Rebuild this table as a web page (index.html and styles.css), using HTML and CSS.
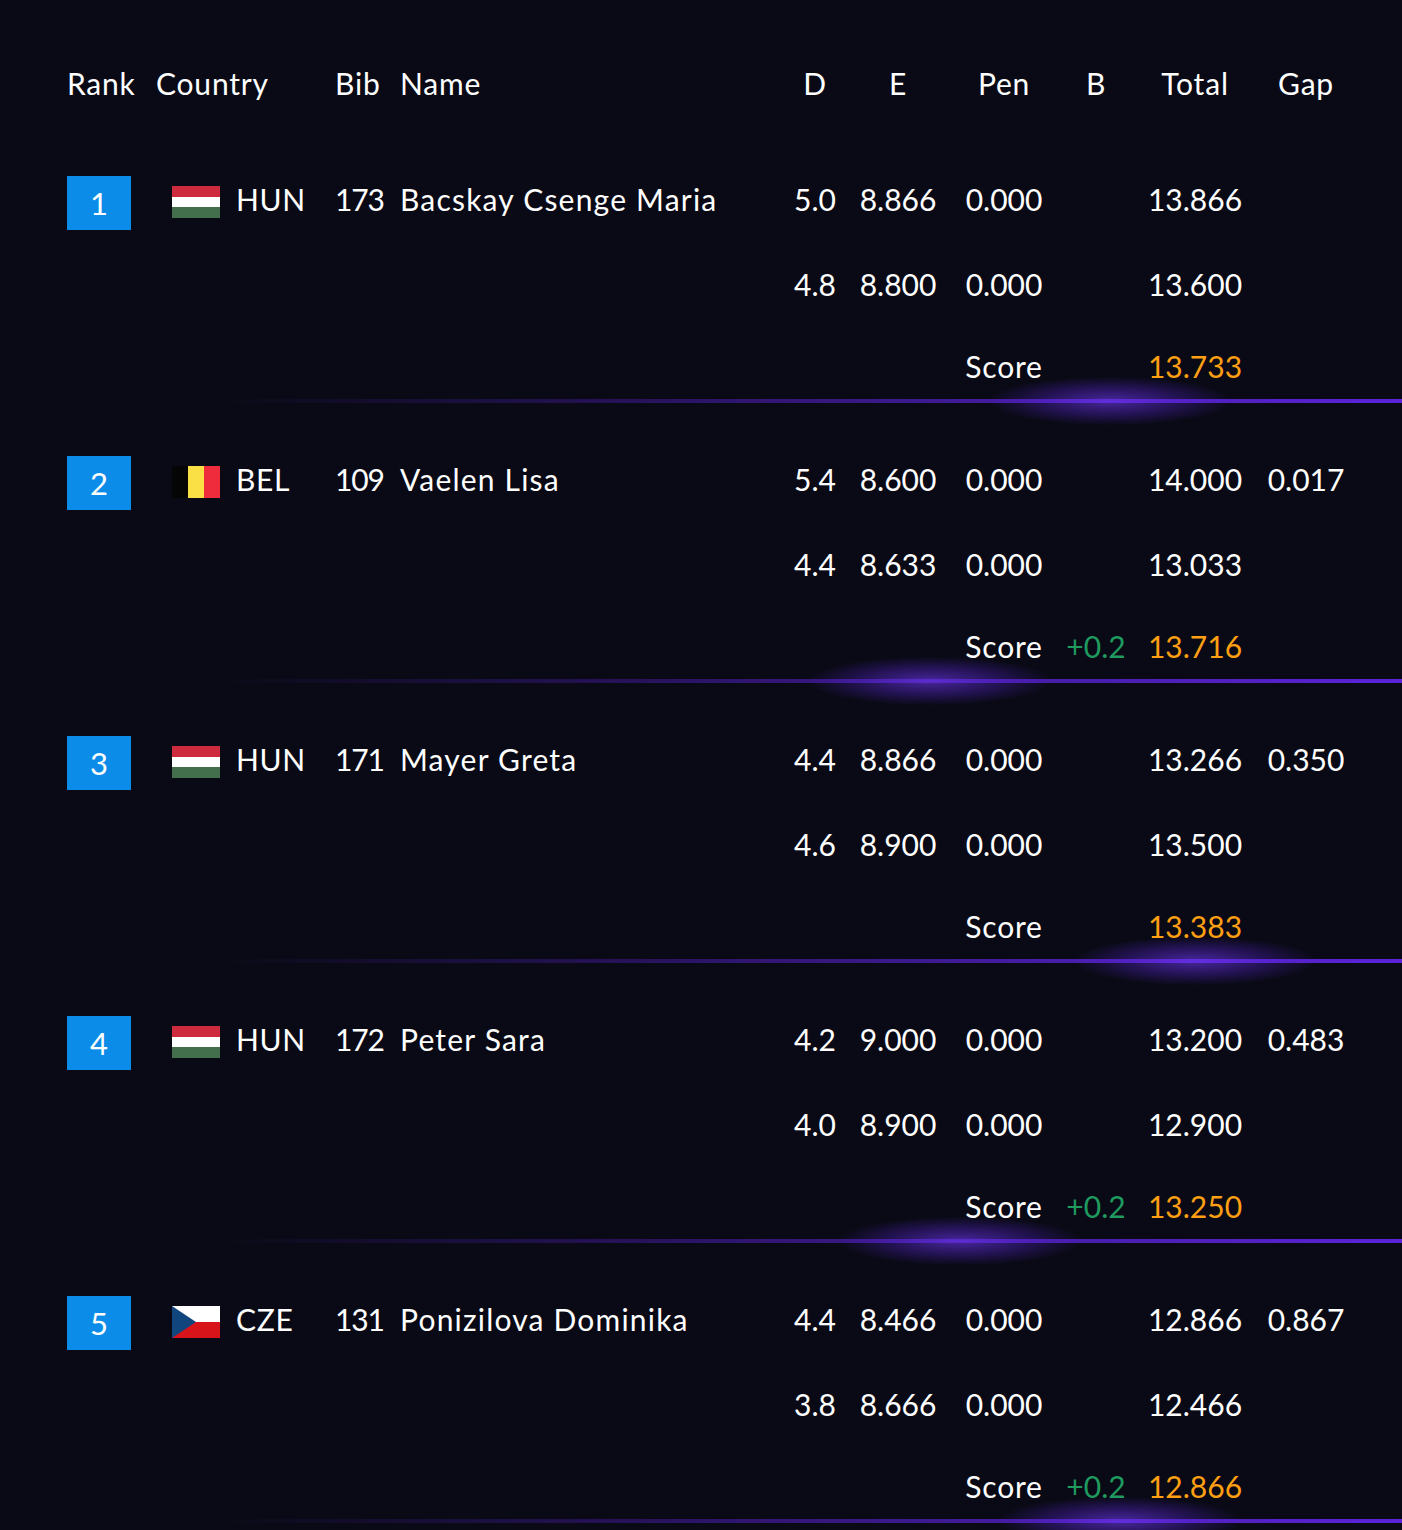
FILE: index.html
```html
<!DOCTYPE html>
<html lang="en">
<head>
<meta charset="utf-8">
<title>Results</title>
<link rel="stylesheet" href="styles.css">
</head>
<body>
<div class="board">
  <div class="row head">
    <div class="c-rank txt">Rank</div>
    <div class="c-country txt">Country</div>
    <div class="c-bib txt">Bib</div>
    <div class="c-name txt">Name</div>
    <div class="num txt">D</div>
    <div class="num txt">E</div>
    <div class="num txt">Pen</div>
    <div class="num txt">B</div>
    <div class="num txt">Total</div>
    <div class="num txt">Gap</div>
  </div>

  <div class="entry first">
    <div class="row line1">
      <div class="c-rank"><span class="rank-box">1</span></div>
      <div class="c-country"><svg class="flag" viewBox="0 0 48 32"><rect width="48" height="11" fill="#cd2a3e"/><rect y="11" width="48" height="10" fill="#ffffff"/><rect y="21" width="48" height="11" fill="#436f4d"/></svg><span class="code">HUN</span></div>
      <div class="c-bib">173</div>
      <div class="c-name">Bacskay Csenge Maria</div>
      <div class="num">5.0</div><div class="num">8.866</div><div class="num">0.000</div><div class="num"></div><div class="num">13.866</div><div class="num"></div>
    </div>
    <div class="row line2">
      <div></div><div></div><div></div><div></div>
      <div class="num">4.8</div><div class="num">8.800</div><div class="num">0.000</div><div class="num"></div><div class="num">13.600</div><div class="num"></div>
    </div>
    <div class="row line3">
      <div></div><div></div><div></div><div></div><div class="num"></div><div class="num"></div>
      <div class="num txt">Score</div><div class="num bonus"></div><div class="num score">13.733</div><div class="num"></div>
    </div>
    <div class="divider"><span class="glow glow-1"></span></div>
  </div>

  <div class="entry">
    <div class="row line1">
      <div class="c-rank"><span class="rank-box">2</span></div>
      <div class="c-country"><svg class="flag" viewBox="0 0 48 32"><rect width="16" height="32" fill="#050505"/><rect x="16" width="16" height="32" fill="#fadf45"/><rect x="32" width="16" height="32" fill="#ee2c3c"/></svg><span class="code">BEL</span></div>
      <div class="c-bib">109</div>
      <div class="c-name">Vaelen Lisa</div>
      <div class="num">5.4</div><div class="num">8.600</div><div class="num">0.000</div><div class="num"></div><div class="num">14.000</div><div class="num">0.017</div>
    </div>
    <div class="row line2">
      <div></div><div></div><div></div><div></div>
      <div class="num">4.4</div><div class="num">8.633</div><div class="num">0.000</div><div class="num"></div><div class="num">13.033</div><div class="num"></div>
    </div>
    <div class="row line3">
      <div></div><div></div><div></div><div></div><div class="num"></div><div class="num"></div>
      <div class="num txt">Score</div><div class="num bonus">+0.2</div><div class="num score">13.716</div><div class="num"></div>
    </div>
    <div class="divider"><span class="glow glow-2"></span></div>
  </div>

  <div class="entry">
    <div class="row line1">
      <div class="c-rank"><span class="rank-box">3</span></div>
      <div class="c-country"><svg class="flag" viewBox="0 0 48 32"><rect width="48" height="11" fill="#cd2a3e"/><rect y="11" width="48" height="10" fill="#ffffff"/><rect y="21" width="48" height="11" fill="#436f4d"/></svg><span class="code">HUN</span></div>
      <div class="c-bib">171</div>
      <div class="c-name">Mayer Greta</div>
      <div class="num">4.4</div><div class="num">8.866</div><div class="num">0.000</div><div class="num"></div><div class="num">13.266</div><div class="num">0.350</div>
    </div>
    <div class="row line2">
      <div></div><div></div><div></div><div></div>
      <div class="num">4.6</div><div class="num">8.900</div><div class="num">0.000</div><div class="num"></div><div class="num">13.500</div><div class="num"></div>
    </div>
    <div class="row line3">
      <div></div><div></div><div></div><div></div><div class="num"></div><div class="num"></div>
      <div class="num txt">Score</div><div class="num bonus"></div><div class="num score">13.383</div><div class="num"></div>
    </div>
    <div class="divider"><span class="glow glow-3"></span></div>
  </div>

  <div class="entry">
    <div class="row line1">
      <div class="c-rank"><span class="rank-box">4</span></div>
      <div class="c-country"><svg class="flag" viewBox="0 0 48 32"><rect width="48" height="11" fill="#cd2a3e"/><rect y="11" width="48" height="10" fill="#ffffff"/><rect y="21" width="48" height="11" fill="#436f4d"/></svg><span class="code">HUN</span></div>
      <div class="c-bib">172</div>
      <div class="c-name">Peter Sara</div>
      <div class="num">4.2</div><div class="num">9.000</div><div class="num">0.000</div><div class="num"></div><div class="num">13.200</div><div class="num">0.483</div>
    </div>
    <div class="row line2">
      <div></div><div></div><div></div><div></div>
      <div class="num">4.0</div><div class="num">8.900</div><div class="num">0.000</div><div class="num"></div><div class="num">12.900</div><div class="num"></div>
    </div>
    <div class="row line3">
      <div></div><div></div><div></div><div></div><div class="num"></div><div class="num"></div>
      <div class="num txt">Score</div><div class="num bonus">+0.2</div><div class="num score">13.250</div><div class="num"></div>
    </div>
    <div class="divider"><span class="glow glow-4"></span></div>
  </div>

  <div class="entry">
    <div class="row line1">
      <div class="c-rank"><span class="rank-box">5</span></div>
      <div class="c-country"><svg class="flag" viewBox="0 0 48 32"><rect width="48" height="16" fill="#ffffff"/><rect y="16" width="48" height="16" fill="#d7141a"/><polygon points="0,0 24,16 0,32" fill="#11457e"/></svg><span class="code">CZE</span></div>
      <div class="c-bib">131</div>
      <div class="c-name">Ponizilova Dominika</div>
      <div class="num">4.4</div><div class="num">8.466</div><div class="num">0.000</div><div class="num"></div><div class="num">12.866</div><div class="num">0.867</div>
    </div>
    <div class="row line2">
      <div></div><div></div><div></div><div></div>
      <div class="num">3.8</div><div class="num">8.666</div><div class="num">0.000</div><div class="num"></div><div class="num">12.466</div><div class="num"></div>
    </div>
    <div class="row line3">
      <div></div><div></div><div></div><div></div><div class="num"></div><div class="num"></div>
      <div class="num txt">Score</div><div class="num bonus">+0.2</div><div class="num score">12.866</div><div class="num"></div>
    </div>
    <div class="divider"><span class="glow glow-5"></span></div>
  </div>
</div>
</body>
</html>
```

FILE: styles.css
```css
html, body {
  margin: 0;
  padding: 0;
  background: #0a0a16;
}

body {
  color: #ffffff;
  font-family: "Lato", "Noto Sans", sans-serif;
  font-size: 30px;
  overflow: hidden;
  height: 1530px;
}

.board {
  padding: 63px 0 0 67px;
}

.row {
  display: grid;
  grid-template-columns: 89px 179px 65px 380px 70px 96px 116px 68px 130px 92px;
  grid-template-rows: 40px;
  height: 40px;
  align-items: center;
  line-height: 40px;
  white-space: nowrap;
}

.num {
  text-align: center;
}

.c-name,
.code {
  letter-spacing: 0.7px;
}

.c-name {
  letter-spacing: 1.2px;
}

.c-bib {
  letter-spacing: -1.2px;
}

.txt,
.head .c-bib,
.head .c-name {
  letter-spacing: 0.8px;
}

.entry {
  padding-top: 56px;
}

.entry.first {
  margin-top: 20px;
  padding-top: 56px;
}

.line2 {
  margin-top: 45px;
}

.line3 {
  margin-top: 42px;
}

.c-rank {
  display: flex;
  align-items: center;
  height: 40px;
}

.rank-box {
  display: flex;
  flex: none;
  align-items: center;
  justify-content: center;
  width: 64px;
  height: 54px;
  transform: translateY(4px);
  background: #0b8ce8;
  color: #ffffff;
  font-size: 31px;
  line-height: 1;
}

.c-country {
  display: flex;
  align-items: center;
  height: 40px;
}

.flag {
  width: 48px;
  height: 32px;
  margin-left: 16px;
  transform: translateY(3px);
  flex: none;
}

.code {
  margin-left: 16px;
}

.bonus {
  color: #1f9a5f;
}

.score {
  color: #ff9f12;
}

.divider {
  position: relative;
  height: 4px;
  margin-top: 13px;
  margin-left: 155px;
  background: linear-gradient(90deg, rgba(92, 35, 218, 0) 0%, rgba(92, 35, 218, 0.35) 35%, rgba(92, 35, 218, 0.75) 70%, #5c23da 100%);
}

.glow {
  position: absolute;
  top: -22px;
  width: 240px;
  height: 48px;
  border-radius: 50%;
  background: radial-gradient(ellipse at center, rgba(112, 56, 245, 0.6) 0%, rgba(96, 40, 230, 0.3) 40%, rgba(80, 30, 200, 0) 72%);
}

.glow-1 { left: 768px; }
.glow-2 { left: 588px; }
.glow-3 { left: 853px; }
.glow-4 { left: 618px; }
.glow-5 { left: 778px; }
```
